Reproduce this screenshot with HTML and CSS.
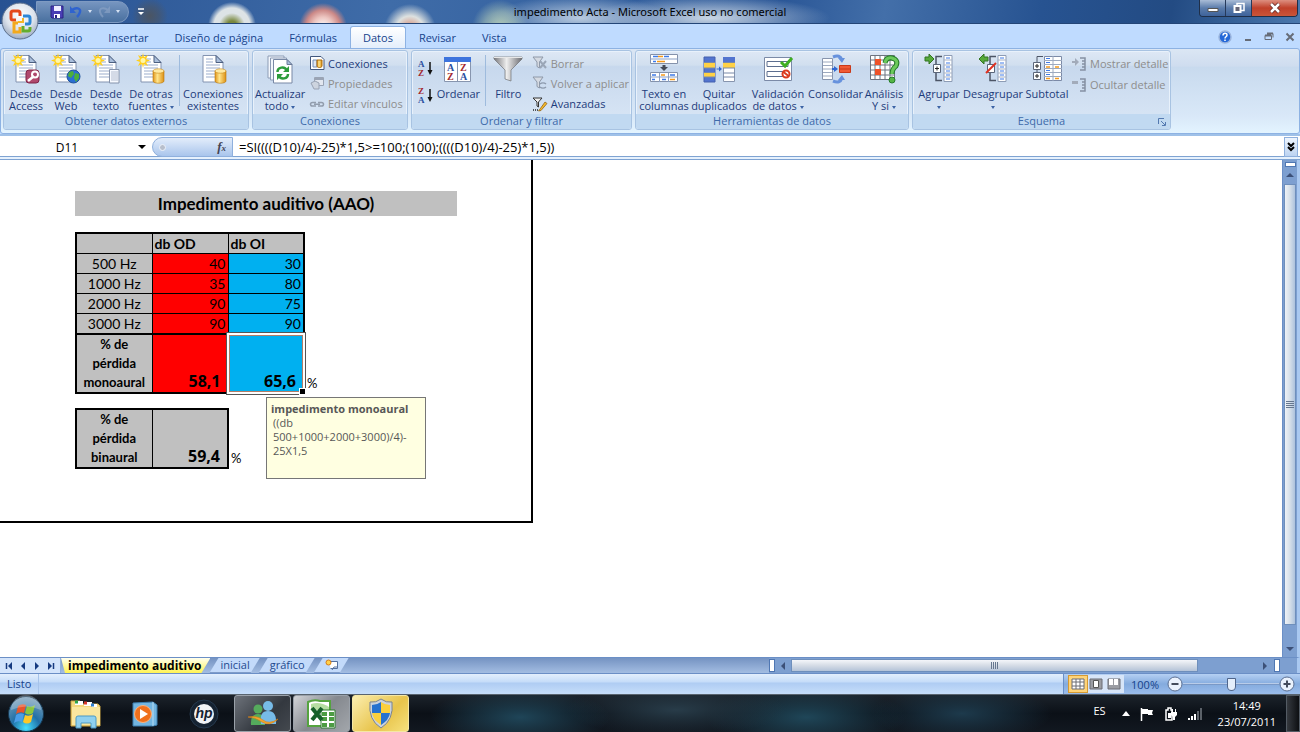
FILE: index.html
```html
<!DOCTYPE html>
<html lang="es">
<head>
    <meta charset="UTF-8">
    <meta name="viewport" content="width=device-width, initial-scale=1.0">
    <title>impedimento Acta - Microsoft Excel uso no comercial</title>
    <link rel="stylesheet" href="styles.css">
</head>
<body>
    <!-- Shared icon parts -->
    <svg class="defs" aria-hidden="true">
        <defs>
            <linearGradient id="gold" x1="0" x2="1" y1="0" y2="0"><stop offset="0" stop-color="#e0951a"/><stop offset=".4" stop-color="#ffe58c"/><stop offset="1" stop-color="#dc9014"/></linearGradient>
            <linearGradient id="steel" x1="0" x2="1" y1="0" y2="0"><stop offset="0" stop-color="#77777b"/><stop offset=".45" stop-color="#eeeeee"/><stop offset="1" stop-color="#6d6d72"/></linearGradient>
            <radialGradient id="orb" cx=".5" cy=".35" r=".65"><stop offset="0" stop-color="#fff"/><stop offset=".6" stop-color="#dde3ec"/><stop offset="1" stop-color="#9cabc2"/></radialGradient>
            <radialGradient id="start" cx=".5" cy=".9" r=".9"><stop offset="0" stop-color="#44e0ff"/><stop offset=".45" stop-color="#2070a8"/><stop offset="1" stop-color="#7d9fb8"/></radialGradient>
            <symbol id="page" viewBox="0 0 32 32">
                <path d="M6 2.500h13l7 7V29H6z" fill="#fff" stroke="#8393b0"/>
                <path d="M19 2.500v7h7z" fill="#a9bedb" stroke="#4c5f80"/>
                <path d="M9 12h14M9 15h14M9 18h14M9 21h14M9 24h14M9 6h7M9 9h7" stroke="#9badcc"/>
            </symbol>
            <symbol id="spark" viewBox="0 0 32 32">
                <path d="M8 0l1 4 4-2-2 4 4 1.500-4 1.500 2 4-4-2-1 4-1-4-4 2 2-4-4-1.500 4-1.500-2-4 4 2z" fill="#ffcf1e"/>
                <circle cx="8" cy="7.500" r="2.500" fill="#fff7a8"/>
            </symbol>
            <symbol id="drum" viewBox="0 0 32 32">
                <path d="M18 18v10c0 3 11 3 11 0V18z" fill="url(#gold)" stroke="#b9770c" stroke-width=".6"/>
                <ellipse cx="23.500" cy="18" rx="5.500" ry="2.200" fill="#ffe9a0" stroke="#c98a18" stroke-width=".6"/>
            </symbol>
            <symbol id="outline" viewBox="0 0 32 32">
                <path d="M21 2.500h8v26h-8z" fill="#fff" stroke="#8d9cb5"/>
                <path d="M21 7h8M21 12h8M21 16h8M21 20h8M21 24h8" stroke="#a9b4c6"/>
                <path d="M23 5h4M23 10h4M23 14h4M23 18h4M23 22h4M23 26h4" stroke="#3f7be8"/>
                <path d="M19 3.500h-6V11M13 20v7.500h6" fill="none" stroke="#4c5566" stroke-width="1.500"/>
            </symbol>
            <symbol id="funnel" viewBox="0 0 16 16">
                <path d="M1 2h10L7.500 7v6L5 11.500V7z" fill="#d5dae2" stroke="#8e98a8"/>
            </symbol>
        </defs>
    </svg>

    <header class="titlebar">
        <div class="quick">
            <button class="plain" aria-label="Guardar"><svg width="14" height="14" viewBox="0 0 14 14"><path d="M1 1h12v12H2l-1-1z" fill="#4a3fb5" stroke="#2b2382"/><path d="M4 1h7v5H4z" fill="#eef"/><path d="M4 9h6v4H4z" fill="#fff"/><path d="M5 10h2v3H5z" fill="#2b2382"/></svg></button>
            <button class="plain" aria-label="Deshacer"><svg width="14" height="14" viewBox="0 0 14 14"><path d="M3 5c4-3 9-2 8 2-.5 2-2 4-3 5" fill="none" stroke="#2f63cf" stroke-width="2.500"/><path d="M1 1v7h6z" fill="#2f63cf"/></svg></button>
            <i class="arrow pale"></i>
            <button class="plain faded" aria-label="Rehacer"><svg width="14" height="14" viewBox="0 0 14 14"><path d="M11 5c-4-3-9-2-8 2 .5 2 2 4 3 5" fill="none" stroke="#8fa6c8" stroke-width="2"/><path d="M13 1v7H7z" fill="#8fa6c8"/></svg></button>
            <i class="arrow pale"></i>
        </div>
        <button class="plain more" aria-label="Personalizar barra"><svg width="8" height="8" viewBox="0 0 8 8"><path d="M1 1h6" stroke="#fff" stroke-width="1.500"/><path d="M1 4h6L4 7z" fill="#fff"/></svg></button>
        <h1 class="caption">impedimento Acta - Microsoft Excel uso no comercial</h1>
        <div class="window-buttons">
            <button aria-label="Minimizar"><svg width="12" height="12" viewBox="0 0 12 12"><path d="M1 6.500h10v3H1z" fill="#fff" stroke="#555"/></svg></button>
            <button aria-label="Restaurar"><svg width="12" height="12" viewBox="0 0 12 12"><path d="M4 1.500h7v7H4z" fill="none" stroke="#fff" stroke-width="1.500"/><path d="M1.500 4h6v6h-6z" fill="#667" stroke="#fff" stroke-width="2"/></svg></button>
            <button class="close" aria-label="Cerrar"><svg width="12" height="12" viewBox="0 0 12 12"><path d="M2 2l8 8M10 2l-8 8" stroke="#5b2525" stroke-width="4"/><path d="M2 2l8 8M10 2l-8 8" stroke="#fff" stroke-width="2.500"/></svg></button>
        </div>
        <button class="office" aria-label="Botón de Office">
            <svg width="38" height="38" viewBox="0 0 38 38">
                <circle cx="19" cy="19" r="18" fill="url(#orb)" stroke="#5c6f8c"/>
                <g fill="none" stroke-width="3">
                    <path d="M15 18h-3q-2 0-2-2v-5q0-2 2-2h5q2 0 2 2v3" stroke="#e4481c"/>
                    <path d="M22 14h5q2 0 2 2v4q0 2-2 2h-3" stroke="#2d86d6"/>
                    <path d="M17 21h-4v9h6v-5" stroke="#f3a91c"/>
                    <path d="M22 24v5h5q2 0 2-2v-2" stroke="#64ae2c"/>
                    <path d="M17 20h5v-4" stroke="#f5b526" stroke-width="2"/>
                </g>
            </svg>
        </button>
    </header>

    <nav class="tabs">
        <button>Inicio</button>
        <button>Insertar</button>
        <button>Diseño de página</button>
        <button>Fórmulas</button>
        <button class="active">Datos</button>
        <button>Revisar</button>
        <button>Vista</button>
        <div class="doc-buttons">
            <button aria-label="Ayuda"><svg width="14" height="14" viewBox="0 0 14 14"><circle cx="7" cy="7" r="6" fill="#2468d8" stroke="#9ab4dd" stroke-width="1.500"/><path d="M5 5.500c0-3 4-3 4-.5C9 7 7 6.500 7 8.500M7 9.500V11" fill="none" stroke="#fff" stroke-width="1.500"/></svg></button>
            <button aria-label="Minimizar libro"><svg width="10" height="10" viewBox="0 0 10 10"><path d="M2 8h6" stroke="#666c77" stroke-width="2"/></svg></button>
            <button aria-label="Restaurar libro"><svg width="10" height="10" viewBox="0 0 10 10"><path d="M3 1.500h6v4M1 3.500h6.500v4H1z" fill="none" stroke="#666c77"/><path d="M1 3.500h6M3 1.500h6" stroke="#666c77" stroke-width="2"/></svg></button>
            <button aria-label="Cerrar libro"><svg width="10" height="10" viewBox="0 0 10 10"><path d="M1.500 1.500l7 7M8.500 1.500l-7 7" stroke="#666c77" stroke-width="2"/></svg></button>
        </div>
    </nav>

    <div class="ribbon">
        <section class="group external">
            <div class="tools">
                <button class="big"><svg viewBox="0 0 32 32"><use href="#page"/><use href="#spark"/><rect x="16" y="17" width="13" height="13" rx="3" fill="#b0486d" stroke="#7f2447"/><path d="M18 28l6-5" stroke="#fff" stroke-width="2.500"/><circle cx="25" cy="21.500" r="3" fill="none" stroke="#fff" stroke-width="2"/></svg>Desde<br>Access</button>
                <button class="big"><svg viewBox="0 0 32 32"><use href="#page"/><use href="#spark"/><circle cx="23.500" cy="23.500" r="6.500" fill="#2a6ed2" stroke="#20539c"/><path d="M19 19l4-1 1 3-3 4-3-2zM25 20l4 1v4l-3 4-2-4z" fill="#4caf3a"/></svg>Desde<br>Web</button>
                <button class="big"><svg viewBox="0 0 32 32"><use href="#page"/><use href="#spark"/><path d="M19.500 16.500h9.500V30h-9.500z" fill="#f6f9ff" stroke="#8492ab"/><path d="M21 19h7M21 21h7M21 23h7M21 25h7M21 27h7" stroke="#b3bdd0"/></svg>Desde<br>texto</button>
                <button class="big wide"><svg viewBox="0 0 32 32"><use href="#page"/><use href="#spark"/><use href="#drum"/></svg>De otras<br>fuentes <i class="arrow"></i></button>
                <i class="rule"></i>
                <button class="big wider"><svg viewBox="0 0 32 32"><use href="#page"/><use href="#drum"/></svg>Conexiones<br>existentes</button>
            </div>
            <h2>Obtener datos externos</h2>
        </section>

        <section class="group connections">
            <div class="tools">
                <button class="big wide"><svg viewBox="0 0 32 32"><path d="M4 3h16v22H4z" fill="#f3f7fd" stroke="#8d9cb5"/><path d="M6.500 5h16v22h-16z" fill="#f3f7fd" stroke="#8d9cb5"/><path d="M9.500 6.500H23l5 5V30H9.500z" fill="#fff" stroke="#7888a5"/><path d="M23 6.500v5h5z" fill="#a9bedb" stroke="#6b7b99"/><path d="M13.500 19c0-5 7-6 9-2M24 21c0 5-7 6-9 2" fill="none" stroke="#2e9c3c" stroke-width="2.500"/><path d="M25 13v6h-6zM13 27v-6h6z" fill="#2e9c3c"/></svg>Actualizar<br>todo <i class="arrow"></i></button>
                <div class="stack">
                    <button><svg width="16" height="16" viewBox="0 0 16 16"><path d="M1.500 1.500H12l3 3v10H1.500z" fill="#fff" stroke="#42577d"/><path d="M4 5h4v7H4z" fill="#dce6f5" stroke="#758fb7"/><path d="M8 5v6c0 2 5 2 5 0V5z" fill="url(#gold)" stroke="#a8690b"/></svg>Conexiones</button>
                    <button disabled><svg width="16" height="16" viewBox="0 0 16 16"><path d="M5.500 2.500h9v8h-9z" fill="#e2e7f0" stroke="#9aa4b5"/><path d="M6 4h8" stroke="#9aa4b5" stroke-width="2"/><path d="M2 8l4-2 4 2v6H5z" fill="#cdd4df" stroke="#98a2b3"/></svg>Propiedades</button>
                    <button disabled><svg width="16" height="16" viewBox="0 0 16 16"><path d="M7 6.500H3.500q-2 0-2 1.800t2 1.800H7M9 6.500h3.500q2 0 2 1.800t-2 1.800H9M5 8.300h6" fill="none" stroke="#929dad" stroke-width="1.500"/></svg>Editar vínculos</button>
                </div>
            </div>
            <h2>Conexiones</h2>
        </section>

        <section class="group sorting">
            <div class="tools">
                <div class="sorters">
                    <button aria-label="Ordenar de A a Z"><svg width="18" height="18" viewBox="0 0 18 18"><text x="1" y="8" class="ico-letter blue">A</text><text x="1" y="17" class="ico-letter red">Z</text><path d="M13 3v9" stroke="#111" stroke-width="1.500"/><path d="M10.500 11h5L13 16z" fill="#111"/></svg></button>
                    <button aria-label="Ordenar de Z a A"><svg width="18" height="18" viewBox="0 0 18 18"><text x="1" y="8" class="ico-letter red">Z</text><text x="1" y="17" class="ico-letter blue">A</text><path d="M13 3v9" stroke="#111" stroke-width="1.500"/><path d="M10.500 11h5L13 16z" fill="#111"/></svg></button>
                </div>
                <button class="big order"><svg viewBox="0 0 32 32"><path d="M2.500 4.500h26v24h-26z" fill="#fff" stroke="#8795ae"/><path d="M2 4h27v5H2z" fill="#3d74dd"/><path d="M15.500 9v19" stroke="#8795ae"/><g class="ico-letter tall"><text x="5" y="18" class="blue">A</text><text x="5" y="27" class="red">Z</text><text x="18" y="18" class="red">Z</text><text x="18" y="27" class="blue">A</text></g></svg>Ordenar</button>
                <i class="rule"></i>
                <button class="big"><svg viewBox="0 0 32 32"><path d="M2 4h28v2L19 17v11l-6-2V17L2 6z" fill="url(#steel)" stroke="#707277" stroke-width=".7"/><path d="M2 4.500h28" stroke="#e8e8e8"/></svg>Filtro</button>
                <div class="stack">
                    <button disabled><svg width="16" height="16" viewBox="0 0 16 16"><use href="#funnel"/><path d="M8 6l6 7M14 6l-6 7" stroke="#9aa6b7" stroke-width="2"/></svg>Borrar</button>
                    <button disabled><svg width="16" height="16" viewBox="0 0 16 16"><use href="#funnel"/><path d="M8 9a4 3 0 0 1 6 0M14 12a4 3 0 0 1-6 0" fill="none" stroke="#8e9bae" stroke-width="1.500"/></svg>Volver a aplicar</button>
                    <button><svg width="16" height="16" viewBox="0 0 16 16"><path d="M1 2h9L6.500 6v5L5 10V6z" fill="#eee" stroke="#333"/><path d="M8 13l-1.500 2L9 14.500l6-7-2-1.500z" fill="#f5b92c" stroke="#86590b" stroke-width=".7"/><path d="M1 14h5" stroke="#222" stroke-dasharray="1 1" stroke-width="1.500"/></svg>Avanzadas</button>
                </div>
            </div>
            <h2>Ordenar y filtrar</h2>
        </section>

        <section class="group datatools">
            <div class="tools">
                <button class="big"><svg viewBox="0 0 32 32"><path d="M2.500 1.500h27v9h-27zM2.500 19.500h27v9h-27z" fill="#fff" stroke="#8492ab"/><path d="M2 6h28M2 24h28M11.500 20v9M20.500 20v9" stroke="#8ba0c4"/><path d="M5 3.500h5M16 3.500h5M5 8.500h3M4 22h4M14 26.500h4M22 22h5M4 26.500h3" stroke="#3f7be8" stroke-width="1.500"/><path d="M10 3.500h5M9 8.500h8M13 22h4M22 26.500h5" stroke="#f59a1c" stroke-width="1.500"/><path d="M16 12v3" stroke="#444b57" stroke-width="3"/><path d="M12 14h8l-4 4z" fill="#444b57"/></svg>Texto en<br>columnas</button>
                <button class="big"><svg viewBox="0 0 32 32"><path d="M1 4h11v25H1z" fill="#5274cf" stroke="#4461ae"/><path d="M1 10h11v5H1zM1 20h11v4H1z" fill="#ffd145"/><path d="M20.500 4.500h11v24h-11z" fill="#fff" stroke="#8795ae"/><path d="M20 4h12v5H20z" fill="#5274cf"/><path d="M20 10h12v5H20z" fill="#ffd145"/><path d="M1 9.500h11M1 15h11M1 19.500h11M1 24h11M20 9.500h12M20 15h12M20 20h12M20 24h12" stroke="#7889a8"/><path d="M13.500 16h3" stroke="#3167cf"/><path d="M16 13.500l3 2.500-3 2.500z" fill="#3167cf"/></svg>Quitar<br>duplicados</button>
                <button class="big wider"><svg viewBox="0 0 32 32"><path d="M2.500 4.500h27v23h-27z" fill="#fff" stroke="#7b8aa7"/><path d="M5 8.500h21v5H5zM5 18.500h21v5H5z" fill="#fff" stroke="#5c6e8f"/><path d="M19 9l4 4 7-8" fill="none" stroke="#3fae22" stroke-width="3"/><circle cx="24" cy="21" r="3.500" fill="#fff" stroke="#dc3b1e" stroke-width="2"/><path d="M21.500 19l5 4" stroke="#dc3b1e" stroke-width="2"/></svg>Validación<br>de datos <i class="arrow"></i></button>
                <button class="big"><svg viewBox="0 0 32 32"><path d="M3.500 5.500h10v21h-10z" fill="#fff" stroke="#8795ae"/><path d="M4 9h9M4 12.500h9M4 16h9M4 19.500h9M4 23h9" stroke="#9ca9bf"/><path d="M13 16h3" stroke="#3167cf" stroke-width="2"/><path d="M15 13l4 3-4 3z" fill="#3167cf"/><path d="M20.500 12.500h11v7h-11z" fill="#f05a35" stroke="#c93a1a"/><path d="M21 16h10" stroke="#c93a1a"/><path d="M14 4q7-3 9 3M14 28q7 3 9-3" fill="none" stroke="#6792dd" stroke-width="3"/><path d="M19 5h7l-3 5zM19 27h7l-3-5z" fill="#6792dd"/></svg>Consolidar</button>
                <button class="big"><svg viewBox="0 0 32 32"><path d="M2.500 2.500h24v24h-24z" fill="#fff" stroke="#6d7480"/><path d="M2 7h25M2 12h25M2 17h25M2 22h25M7 2v25M12 2v25M17 2v25M22 2v25" stroke="#6d7480"/><path d="M7 6h6v6H7zM7 16h6v6H7z" fill="#ee5228"/><path d="M17 10q1-6 7-5 7 2 4 8-4 3-4 8" fill="none" stroke="#257c2a" stroke-width="5"/><path d="M17 10q1-6 7-5 7 2 4 8-4 3-4 8" fill="none" stroke="#6cc95b" stroke-width="3"/><circle cx="24" cy="27" r="3" fill="#55b545" stroke="#257c2a"/></svg>Análisis<br>Y si <i class="arrow"></i></button>
            </div>
            <h2>Herramientas de datos</h2>
        </section>

        <section class="group scheme">
            <div class="tools">
                <button class="big wide"><svg viewBox="0 0 32 32"><use href="#outline"/><path d="M2 4h4V1l5 5-5 5V8H2z" fill="#57a93a" stroke="#327422"/><path d="M10.500 11.500h7v8h-7z" fill="#fff" stroke="#5a6579"/><path d="M12 15.500h4M14 13.500v4" stroke="#222"/></svg>Agrupar<br><i class="arrow"></i></button>
                <button class="big"><svg viewBox="0 0 32 32"><use href="#outline"/><path d="M11 4H7V1L2 6l5 5V8h4z" fill="#57a93a" stroke="#327422"/><path d="M10.500 11.500h7v8h-7z" fill="#fff" stroke="#5a6579"/><path d="M9 20l10-10" stroke="#e03222" stroke-width="2"/></svg>Desagrupar<br><i class="arrow"></i></button>
                <button class="big order"><svg viewBox="0 0 32 32"><path d="M2.500 9.500h7v7h-7zM2.500 19.500h7v7h-7z" fill="#fff" stroke="#5a6579"/><path d="M13.500 3.500h17v24h-17z" fill="#fff" stroke="#7b8aa7"/><path d="M13 7.500h18M13 11.500h18M13 15.500h18M13 19.500h18M13 23.500h18M22 3v25" stroke="#9ca9bf"/><path d="M15 5.500h4M15 9.500h4M15 17.500h4M15 21.500h4" stroke="#3f7be8"/><path d="M15 14h4M24 14h4M15 25.500h4M24 25.500h4" stroke="#f59a1c" stroke-width="1.500"/><path d="M12 3.500H6V9M6 16v3" fill="none" stroke="#4c5566"/><path d="M4 13h4M6 11v4M4 23h4M6 21v4" stroke="#222"/></svg>Subtotal</button>
                <div class="stack">
                    <button disabled><svg width="16" height="16" viewBox="0 0 16 16"><path d="M1 5h3V2l4 4-4 4V7H1z" fill="#a2abba"/><path d="M9 2h5v12H9M11 5h3M11 8h3M11 11h3" fill="none" stroke="#8590a2" stroke-width="1.500"/></svg>Mostrar detalle</button>
                    <button disabled><svg width="16" height="16" viewBox="0 0 16 16"><path d="M1 4h6v3H1z" fill="#a2abba"/><path d="M9 2h5v12H9M11 5h3M11 8h3M11 11h3" fill="none" stroke="#8590a2" stroke-width="1.500"/></svg>Ocultar detalle</button>
                </div>
            </div>
            <h2>Esquema</h2>
            <button class="launcher" aria-label="Configuración de esquema"><svg width="8" height="8" viewBox="0 0 8 8"><path d="M.5 6V.5H6M4 7.500h3.500V4M3 3l4 4" fill="none" stroke="#5479b0"/></svg></button>
        </section>
    </div>

    <div class="formula-bar">
        <input class="name-box" type="text" value="D11" aria-label="Cuadro de nombres">
        <i class="arrow dark"></i>
        <div class="fx"><i class="knob"></i><button aria-label="Insertar función">f<small>x</small></button></div>
        <input class="formula" type="text" value="=SI((((D10)/4)-25)*1,5&gt;=100;(100);((((D10)/4)-25)*1,5))" aria-label="Barra de fórmulas">
        <button class="expand" aria-label="Expandir barra de fórmulas"><svg width="8" height="10" viewBox="0 0 8 10"><path d="M1 1l3 3 3-3M1 5l3 3 3-3" fill="none" stroke="#000" stroke-width="2"/></svg></button>
    </div>

    <main class="workbook">
        <div class="sheet">
            <div class="print-area">
                <h2 class="sheet-title">Impedimento auditivo (AAO)</h2>
                <div class="result">
                    <table>
                        <tr class="head"><th></th><th scope="col">db OD</th><th scope="col">db OI</th></tr>
                        <tr><th scope="row">500 Hz</th><td class="od">40</td><td class="oi">30</td></tr>
                        <tr><th scope="row">1000 Hz</th><td class="od">35</td><td class="oi">80</td></tr>
                        <tr><th scope="row">2000 Hz</th><td class="od">90</td><td class="oi">75</td></tr>
                        <tr><th scope="row">3000 Hz</th><td class="od">90</td><td class="oi">90</td></tr>
                        <tr class="total"><th scope="row">% de pérdida monoaural</th><td class="od">58,1</td><td class="oi selected">65,6</td></tr>
                    </table>
                    <span class="unit">%</span>
                    <div class="tip"><b>impedimento monoaural</b><p>((db 500+1000+2000+3000)/4)-<wbr>25X1,5</p></div>
                </div>
                <div class="result">
                    <table class="short">
                        <tr class="total"><th scope="row">% de pérdida binaural</th><td>59,4</td></tr>
                    </table>
                    <span class="unit">%</span>
                </div>
            </div>
        </div>
        <div class="vscroll">
            <i class="split"></i>
            <i class="up"></i>
            <div class="thumb"></div>
            <i class="down"></i>
        </div>
    </main>

    <div class="sheet-bar">
        <div class="sheet-nav">
            <button aria-label="Primera hoja"><svg width="8" height="8" viewBox="0 0 8 8"><path d="M1.500 1v6" stroke="#173b80" stroke-width="1.500"/><path d="M7 0v8L3 4z" fill="#173b80"/></svg></button>
            <button aria-label="Hoja anterior"><svg width="8" height="8" viewBox="0 0 8 8"><path d="M6 0v8L2 4z" fill="#173b80"/></svg></button>
            <button aria-label="Hoja siguiente"><svg width="8" height="8" viewBox="0 0 8 8"><path d="M2 0v8l4-4z" fill="#173b80"/></svg></button>
            <button aria-label="Última hoja"><svg width="8" height="8" viewBox="0 0 8 8"><path d="M6.500 1v6" stroke="#173b80" stroke-width="1.500"/><path d="M1 0v8l4-4z" fill="#173b80"/></svg></button>
        </div>
        <div class="sheet-tabs">
            <button class="current">impedimento auditivo</button>
            <button>inicial</button>
            <button>gráfico</button>
            <button aria-label="Insertar hoja"><svg width="14" height="12" viewBox="0 0 14 12"><path d="M4.500 2.500h8v7h-7" fill="#fff" stroke="#5470a0"/><path d="M7 11l2-3h3" fill="none" stroke="#5470a0"/><circle cx="3.500" cy="3.500" r="2.500" fill="#ffd24a" stroke="#d77b17"/></svg></button>
        </div>
        <div class="hscroll">
            <i class="split"></i>
            <i class="left"></i>
            <div class="thumb"></div>
            <i class="right"></i>
            <i class="split"></i>
        </div>
    </div>

    <footer class="status">
        <span class="ready">Listo</span>
        <div class="zoom">
            <div class="views">
                <button class="on" aria-label="Normal"><svg width="14" height="12" viewBox="0 0 14 12"><path d="M1 1h12v10H1zM1 4h12M1 8h12M5 1v10M9 1v10" fill="#fff" stroke="#6a6d75"/></svg></button>
                <button aria-label="Diseño de página"><svg width="14" height="12" viewBox="0 0 14 12"><path d="M1 1h12v10H1z" fill="#9b9da3" stroke="#6a6d75"/><path d="M4.500 2.500h5v7h-5z" fill="#fff" stroke="#555"/></svg></button>
                <button aria-label="Vista previa de salto de página"><svg width="14" height="12" viewBox="0 0 14 12"><path d="M1 1h12v10H1z" fill="#9b9da3" stroke="#6a6d75"/><path d="M2 1h4v6H2zM7 1h4v6H7z" fill="#fff"/></svg></button>
            </div>
            <label for="zoom">100%</label>
            <button class="round" aria-label="Alejar"><svg width="16" height="16" viewBox="0 0 16 16"><circle cx="8" cy="8" r="7" fill="#eaf2fd" stroke="#5b6f92"/><path d="M4.500 8h7" stroke="#444c5c" stroke-width="2"/></svg></button>
            <input type="range" id="zoom" min="0" max="100" value="50">
            <button class="round" aria-label="Acercar"><svg width="16" height="16" viewBox="0 0 16 16"><circle cx="8" cy="8" r="7" fill="#eaf2fd" stroke="#5b6f92"/><path d="M4.500 8h7M8 4.500v7" stroke="#444c5c" stroke-width="2"/></svg></button>
        </div>
    </footer>

    <div class="taskbar">
        <button class="start" aria-label="Inicio de Windows"><svg width="38" height="38" viewBox="0 0 38 38"><circle cx="19" cy="19" r="17.500" fill="url(#start)" stroke="#16364e"/><path d="M11 11q4-3 8-1l-2 8q-4-2-8 1z" fill="#e8542a"/><path d="M20 11q4 2 8-1l-2 8q-4 3-8 0z" fill="#8cc63e"/><path d="M9 20q4-3 8-1l-2 8q-4-2-8 1z" fill="#4a9de8"/><path d="M18 20q4 2 8-1l-2 8q-4 3-8 0z" fill="#fdc828"/><path d="M4 15a15 15 0 0 1 30 0q-15-7-30 0z" fill="#fff" opacity=".25"/></svg></button>
        <button aria-label="Explorador de Windows"><svg width="34" height="32" viewBox="0 0 34 32"><path d="M2 8V3h9l2 3h16l2 2v20H2z" fill="#f3d67c" stroke="#c9a343"/><path d="M6 5h8M15 6h8M23 8h5" stroke="#fff" stroke-width="4"/><path d="M6 4h3" stroke="#2ca34a" stroke-width="3"/><path d="M15 5h3" stroke="#d9362b" stroke-width="3"/><path d="M22 7h3" stroke="#2f7fd0" stroke-width="3"/><path d="M3 9h28v18H3z" fill="#fae69f"/><path d="M7 30V20q0-2 2-2h16q2 0 2 2v10h-5v-5H12v5z" fill="#8fd0ef" stroke="#4d99c4"/></svg></button>
        <button aria-label="Reproductor de Windows Media"><svg width="28" height="28" viewBox="0 0 28 28"><path d="M2 3l20-1 4 3v20l-4 1H2z" fill="#73b5e0" stroke="#3c7fb0"/><path d="M22 2v24" stroke="#b8dcf2"/><circle cx="12" cy="14" r="8.500" fill="#f0701c" stroke="#fbb27c"/><path d="M9 9l8 5-8 5z" fill="#fff"/></svg></button>
        <button aria-label="HP"><svg width="32" height="32" viewBox="0 0 32 32"><circle cx="16" cy="16" r="14" fill="#152231" stroke="#26394d"/><circle cx="16" cy="16" r="10" fill="#f1f3f5"/><text x="16" y="20" class="hp" text-anchor="middle">hp</text></svg></button>
        <button class="open" aria-label="Messenger"><svg width="34" height="32" viewBox="0 0 34 32"><circle cx="12" cy="11" r="4.500" fill="#55ab5c"/><path d="M5 27q-1-11 7-11t7 11z" fill="#55ab5c"/><circle cx="22" cy="8" r="5" fill="#77bbe8"/><path d="M15 26q-2-13 7-13t8 13z" fill="#77bbe8"/><path d="M2 19q9-2 15 3t15-1q-8 8-16 3T2 19z" fill="#f5a62c" stroke="#d67f12" stroke-width=".6"/></svg></button>
        <button class="open lit" aria-label="Microsoft Excel"><svg width="34" height="32" viewBox="0 0 34 32"><path d="M3 4q6-3 12-1h10v25H3z" fill="#fff" stroke="#55a33f" stroke-width="2"/><path d="M6 6q9-3 18 3v3H6z" fill="#b6dda2"/><path d="M16 12h14v18H16z" fill="#fff" stroke="#2f7d2f"/><path d="M17 14h5v4h-5zM24 14h5v4h-5zM17 19h5v4h-5zM24 19h5v4h-5zM17 25h5v4h-5zM24 25h5v4h-5z" fill="#4c9c42"/><path d="M7 10l10 12M17 10L7 22" stroke="#17602b" stroke-width="4"/></svg></button>
        <button class="open alert" aria-label="Control de cuentas"><svg width="28" height="32" viewBox="0 0 28 32"><path d="M14 1q5 4 11 3 2 18-11 26Q1 22 3 4q6 1 11-3z" fill="#ccd3dc" stroke="#7a838f"/><path d="M14 4v11H5V7q5 0 9-3z" fill="#2672cf"/><path d="M14 4v11h9V7q-5 0-9-3z" fill="#fbd03d"/><path d="M5 15h9v12Q6 22 5 15z" fill="#fbd03d"/><path d="M14 15h9q-1 7-9 12z" fill="#2672cf"/></svg></button>
        <div class="tray">
            <span class="lang">ES</span>
            <svg width="8" height="5" viewBox="0 0 8 5"><path d="M0 5l4-5 4 5z" fill="#fff"/></svg>
            <svg width="14" height="14" viewBox="0 0 14 14"><path d="M1.500 1v13" stroke="#fff" stroke-width="1.500"/><path d="M2 2h6v1h5l-1 3 1 2H8V7H2z" fill="#fff"/></svg>
            <svg width="14" height="14" viewBox="0 0 14 14"><path d="M2 3h2V1h3v2h1v10H2z" fill="none" stroke="#fff" stroke-width="1.500"/><path d="M4 6h3v5H4zM7 5h6v3l-2 2v3H9v-3L7 8z" fill="#fff"/><path d="M8.500 2v3M11.500 2v3" stroke="#fff"/></svg>
            <svg width="14" height="12" viewBox="0 0 14 12"><path d="M0 10h2v2H0zM3 8h2v4H3zM6 6h2v6H6z" fill="#fff"/><path d="M9 3h2v9H9zM12 0h2v12h-2z" fill="#5b6168"/></svg>
            <div class="clock"><time>14:49</time><time>23/07/2011</time></div>
            <button class="desktop" aria-label="Mostrar escritorio"></button>
        </div>
    </div>
</body>
</html>
```
FILE: styles.css
```css
* {
    box-sizing: border-box;
}
body {
    margin: 0;
    min-height: 100vh;
    display: flex;
    flex-direction: column;
    font-family: "Open Sans", "Noto Sans", sans-serif;
    font-size: 11px;
    color: #1e3c7b;
    background-color: #bfdbff;
}
button, input {
    font: inherit;
    color: inherit;
    background: none;
    border: 0;
    padding: 0;
    margin: 0;
}
h1, h2, p {
    margin: 0;
    font-size: 11px;
    font-weight: normal;
}
svg {
    display: block;
}
.defs {
    position: absolute;
    width: 0;
    height: 0;
}
.arrow {
    display: inline-block;
    border: 2px solid transparent;
    border-top: 3px solid #3c63a5;
    border-bottom: 0;
    vertical-align: middle;
}
.arrow.pale {
    border-top-color: #d5e2f3;
}
.arrow.dark {
    border-width: 4px 4px 0;
    border-top-color: #000;
}

/* Title bar */
.titlebar {
    position: relative;
    height: 24px;
    display: flex;
    align-items: center;
    background:
        radial-gradient(circle at 150px 16px, #4b5563 0, #4b556388 10px, transparent 18px),
        radial-gradient(circle at 232px 26px, #79883e 0, #79883e 5px, #dde3e6 13px, #dde3e6 18px, transparent 24px),
        radial-gradient(circle at 323px 27px, #fff 0, #ecc5c0 10px, #cc8987 17px, transparent 24px),
        radial-gradient(circle at 410px 30px, #d37b60 0, #dde1e0 14px, transparent 26px),
        radial-gradient(circle at 500px 28px, #b6ceb8 0, #b6ceb888 16px, transparent 28px),
        radial-gradient(ellipse 90px 22px at 580px 18px, #b9cbe0 0, transparent),
        radial-gradient(ellipse 120px 22px at 710px 18px, #c9d6e5 0, transparent),
        linear-gradient(100deg, #285292, #3f6ca8 30%, #2b5797 60%, #436fa9 68%, #275391 80%, #234b83 90%, #4a78ad);
    border-bottom: 1px solid #234577;
}
.quick {
    height: 22px;
    margin-left: 36px;
    padding: 0 8px 0 13px;
    display: flex;
    align-items: center;
    gap: 5px;
    border: 1px solid #7e9ac2;
    border-radius: 0 11px 11px 0;
    background: linear-gradient(#7695c0, #49709f);
}
.faded {
    opacity: .6;
}
.more {
    margin-left: 8px;
}
.caption {
    position: absolute;
    left: 0;
    right: 0;
    text-align: center;
    font-family: "Noto Sans", sans-serif;
    color: #000;
    pointer-events: none;
}
.window-buttons {
    margin-left: auto;
    margin-right: 2px;
    align-self: flex-start;
    display: flex;
    height: 17px;
    border: 1px solid #1f2f49;
    border-top: 0;
    border-radius: 0 0 4px 4px;
    overflow: hidden;
}
.window-buttons button {
    width: 26px;
    display: grid;
    place-items: center;
    background: linear-gradient(#a9bcd6, #5b7cab 50%, #3e639b);
    border-right: 1px solid #26395a;
}
.window-buttons .close {
    width: 45px;
    border: 0;
    background: linear-gradient(#dd8f80, #c0402a 50%, #c95538);
}
.office {
    position: absolute;
    left: 1px;
    top: 2px;
    z-index: 2;
}

/* Ribbon tabs */
.tabs {
    height: 24px;
    padding: 2px 5px 0 42px;
    display: flex;
    background: #bfdbff;
    color: #15428b;
}
.tabs > button {
    padding: 0 12px;
    border: 1px solid transparent;
    white-space: nowrap;
}
.tabs .active {
    border-color: #8db2e3;
    border-bottom: 0;
    border-radius: 3px 3px 0 0;
    background: linear-gradient(#fff, #e4eefb);
}
.doc-buttons {
    margin-left: auto;
    display: flex;
    align-items: center;
    gap: 11px;
}

/* Ribbon */
.ribbon {
    height: 86px;
    padding: 1px 2px 3px;
    display: flex;
    gap: 3px;
    border: 1px solid #8db2e3;
    border-radius: 3px;
    background: linear-gradient(#dbe6f4, #cfddef 20%, #c8daee 22%, #d9e8f8 80%, #e3f4ff);
}
.group {
    position: relative;
    display: flex;
    flex-direction: column;
    border: 1px solid #a8c3e2;
    border-radius: 3px;
    box-shadow: inset 0 0 0 1px #e8f1fb;
    overflow: hidden;
    background: linear-gradient(#dee8f5, #d1dfef 18%, #c7d8ed 20%, #dae7f6);
}
.external {
    width: 246px;
}
.connections {
    width: 156px;
}
.sorting {
    width: 221px;
}
.datatools {
    width: 274px;
}
.scheme {
    width: 259px;
}
.group h2 {
    height: 15px;
    line-height: 14px;
    text-align: center;
    color: #3e6aaa;
    background: #c1d9f1;
}
.tools {
    flex: 1;
    min-height: 0;
    padding: 2px 2px 0;
    display: flex;
}
.big {
    width: 40px;
    align-self: flex-start;
    white-space: nowrap;
    line-height: 12px;
    text-align: center;
}
.big svg {
    width: 32px;
    height: 32px;
    margin: 0 auto 3px;
}
.wide {
    width: 50px;
}
.wider {
    width: 60px;
}
.order {
    width: 48px;
}
.rule {
    width: 1px;
    margin: 2px 3px 8px;
    background: #9ebbdd;
}
.stack {
    margin-left: 4px;
    display: flex;
    flex-direction: column;
}
.stack button {
    height: 21px;
    display: flex;
    align-items: center;
    gap: 3px;
    white-space: nowrap;
}
.stack button:disabled {
    color: #8d8d8d;
}
.datatools .tools {
    display: grid;
    grid-template-columns: 52px 58px 60px 54px 44px;
}
.datatools .big {
    width: auto;
}
.scheme .tools {
    display: grid;
    grid-template-columns: 48px 60px 48px auto;
}
.scheme .big {
    width: auto;
}
.scheme .stack {
    margin-left: 0;
}
.sorters {
    padding: 6px 0 0 3px;
    display: flex;
    flex-direction: column;
    gap: 9px;
}
.ico-letter {
    font: bold 9px "Liberation Serif", serif;
}
.tall {
    font-size: 10px;
}
.blue {
    fill: #2a4f9f;
}
.red {
    fill: #a3282f;
}
.launcher {
    position: absolute;
    right: 4px;
    bottom: 3px;
}

/* Formula bar */
.formula-bar {
    height: 26px;
    padding: 3px 2px 3px 0;
    display: flex;
    align-items: stretch;
    color: #000;
    background: linear-gradient(#9fc1e8 0, #9fc1e8 2px, #fff 2px, #fff 22px, #7fa3d2 22px, #7fa3d2 23px, #e6f1fd 23px, #e6f1fd 25px, #7fa3d2 25px);
}
.formula-bar input {
    font-family: "Open Sans", sans-serif;
    font-size: 12px;
}
.name-box {
    width: 134px;
    text-align: center;
}
.formula-bar .arrow {
    align-self: center;
    margin: 0 6px 0 4px;
}
.fx {
    width: 81px;
    padding: 0 6px;
    display: flex;
    align-items: center;
    justify-content: space-between;
    border: 1px solid #8fb0dd;
    border-radius: 10px 0 0 10px;
    background: linear-gradient(#e3edfb, #a9c5ec);
}
.fx button {
    font: italic bold 13px "Liberation Serif", serif;
    color: #445;
}
.fx small {
    font-size: 9px;
}
.knob {
    width: 7px;
    height: 7px;
    border-radius: 50%;
    background: #b8bfcc;
    border: 1px solid #edf3fc;
}
.formula-bar .formula {
    flex: 1;
    padding: 0 6px;
    font-size: 13px;
}
.expand {
    width: 14px;
    display: grid;
    place-items: center;
    border: 1px solid #8fb0dd;
    background: linear-gradient(#eef5fe, #bcd3f1);
}

/* Worksheet */
.workbook {
    flex: 1;
    display: flex;
    border-right: 3px solid #a9c8f0;
    background: #fff;
    color: #000;
    font-family: Lato, sans-serif;
}
.sheet {
    flex: 1;
}
.print-area {
    width: 533px;
    padding: 31px 74px 52px 75px;
    border: solid #000;
    border-width: 0 2px 2px 0;
}
.sheet-title {
    margin-bottom: 16px;
    font: bold 17px/25px Lato, sans-serif;
    text-align: center;
    background: #c0c0c0;
}
.result {
    position: relative;
    display: flex;
    align-items: flex-end;
    margin-bottom: 14px;
}
.result:last-child {
    margin-bottom: 0;
}
table {
    width: 230px;
    table-layout: fixed;
    border-collapse: collapse;
    border: 2px solid #000;
    background: #c0c0c0;
    font-size: 14px;
    line-height: 19px;
}
.short {
    width: 154px;
}
th, td {
    height: 20px;
    padding: 0 2px;
    border: 1px solid #000;
}
th {
    font-weight: normal;
    text-align: center;
}
td {
    text-align: right;
}
.head th {
    font-weight: bold;
    text-align: left;
}
.od {
    background: #f00;
}
.oi {
    background: #00b0f0;
}
.total th, .total td {
    border-top: 2px solid #000;
    font-weight: bold;
}
.total th {
    font-size: 13px;
}
.total td {
    padding-right: 7px;
    font: bold 16px/22px "Open Sans", sans-serif;
    vertical-align: bottom;
}
.selected {
    position: relative;
}
.selected::before {
    content: "";
    position: absolute;
    right: -3px;
    bottom: -3px;
    z-index: 1;
    width: 5px;
    height: 5px;
    border: 1px solid #fff;
    background: #000;
}
.selected::after {
    content: "";
    position: absolute;
    inset: -2px;
    border: 2px solid #fff;
    box-shadow: inset 0 0 0 1px #b07d68, 0 0 0 1px #555;
}
.unit {
    margin-left: 2px;
    font-size: 13px;
    line-height: 22px;
}
.tip {
    position: absolute;
    left: 191px;
    top: 165px;
    width: 160px;
    height: 82px;
    padding: 4px;
    border: 1px solid #767676;
    background: #ffffe1;
    color: #575757;
    font: 11px/14px "Open Sans", sans-serif;
    white-space: nowrap;
}
.tip p {
    padding-left: 2px;
    width: 140px;
    white-space: normal;
}

/* Scroll bars */
.vscroll {
    width: 15px;
    padding: 2px 1px;
    display: flex;
    flex-direction: column;
    align-items: center;
    background: #7d9fd0;
    border-left: 1px solid #6b8fc6;
}
.vscroll .split {
    width: 11px;
    height: 5px;
    border: 1px solid #4f77b3;
    background: #fff;
}
.up, .down {
    margin: 6px 0 7px;
    border: 4px solid transparent;
    border-bottom-color: #3c5078;
    border-top: 0;
}
.down {
    margin: 22px 0 4px;
    border-top: 4px solid #3c5078;
    border-bottom: 0;
}
.vscroll .thumb {
    flex: 1;
    width: 12px;
    border: 1px solid #6e8fbc;
    background:
        repeating-linear-gradient(#66778f 0, #66778f 1px, transparent 1px, transparent 2px) center / 8px 8px no-repeat,
        linear-gradient(90deg, #eef2f7, #d5dfe9 50%, #adc2dd);
}
.sheet-bar {
    height: 16px;
    display: flex;
    border-right: 3px solid #a9c8f0;
    border-top: 1px solid #6b8fc6;
    background: linear-gradient(#7593c2, #a3bde2);
}
.sheet-nav {
    width: 61px;
    padding: 0 5px;
    display: flex;
    align-items: center;
    justify-content: space-between;
    border-right: 1px solid #8fb0dd;
    background: #d3e4fb;
}
.sheet-tabs {
    display: flex;
    color: #244a8f;
}
.sheet-tabs button {
    padding: 0 10px 0 11px;
    margin-right: -1px;
    line-height: 14px;
    background: #c3dafa;
    clip-path: polygon(0 100%, 9px 0, 100% 0, calc(100% - 9px) 100%);
    border-bottom: 1px solid #7f9cc9;
}
.sheet-tabs .current {
    padding: 0 9px 0 7px;
    font-weight: bold;
    font-size: 12px;
    color: #000;
    border: 0;
    background: linear-gradient(#fffff0, #fff352);
    clip-path: polygon(0 0, 100% 0, calc(100% - 9px) 100%, 4px 100%);
}
.hscroll {
    flex: 0 0 41%;
    max-width: 528px;
    margin-left: auto;
    padding-right: 17px;
    display: flex;
    align-items: center;
    background: #7d9fd0;
}
.hscroll .split {
    width: 6px;
    height: 13px;
    border: 1px solid #4f77b3;
    background: #fff;
}
.left, .right {
    margin: 0 6px;
    border: 4px solid transparent;
    border-right-color: #3c5078;
    border-left: 0;
}
.right {
    margin: 0 7px 0 65px;
    border-left: 4px solid #3c5078;
    border-right: 0;
}
.hscroll .thumb {
    flex: 1;
    height: 13px;
    border: 1px solid #6e8fbc;
    background:
        repeating-linear-gradient(90deg, #66778f 0, #66778f 1px, transparent 1px, transparent 2px) center / 8px 7px no-repeat,
        linear-gradient(#f4f6fa, #d5dce6 50%, #b4c3d8);
}

/* Status bar */
.status {
    height: 21px;
    display: flex;
    border-top: 1px solid #6b8fc6;
    background: linear-gradient(#e3effd, #c5dcf9 40%, #afccf3 45%, #c6defa);
    color: #15428b;
}
.ready {
    padding: 0 7px;
    line-height: 19px;
    border-right: 1px solid #a6c3ea;
}
.zoom {
    margin-left: auto;
    padding: 0 5px 0 4px;
    display: flex;
    align-items: center;
    border-left: 1px solid #6b8fc6;
    background: linear-gradient(#b5d0f3, #84abde 50%, #9bbdec);
}
.views {
    display: flex;
    margin-right: 7px;
    background: #d7e5f8;
    border: 1px solid #d7e5f8;
}
.views button {
    width: 18px;
    height: 16px;
    display: grid;
    place-items: center;
}
.views .on {
    background: #ffd479;
    outline: 1px solid #d59a34;
}
.zoom label {
    margin-right: 8px;
}
.zoom input {
    width: 96px;
    height: 18px;
    appearance: none;
    background: linear-gradient(#d7e6fa, #5b7fb5) center / 100% 2px no-repeat;
}
.zoom input::-webkit-slider-thumb {
    appearance: none;
    width: 9px;
    height: 13px;
    border: 1px solid #4f658b;
    border-radius: 1px 1px 5px 5px;
    background: #e4eefb;
}

/* Taskbar */
.taskbar {
    height: 38px;
    padding-left: 6px;
    display: flex;
    align-items: center;
    border-top: 1px solid #59646f;
    background:
        radial-gradient(ellipse 90px 30px at 40% 60%, #1f4558 0, transparent),
        radial-gradient(ellipse 110px 26px at 52% 40%, #283c49 0, transparent),
        radial-gradient(ellipse 100px 32px at 62% 60%, #1f4658 0, transparent),
        radial-gradient(ellipse 90px 28px at 74% 50%, #1d3a4c 0, transparent),
        linear-gradient(#1c232b, #0b1017 50%, #121820);
    color: #fff;
}
.taskbar > button {
    width: 57px;
    height: 37px;
    margin-right: 2px;
    display: grid;
    place-items: center;
}
.taskbar .start {
    width: 40px;
    margin-right: 11px;
}
.taskbar .open {
    border: 1px solid #9aa1a9;
    border-radius: 3px;
    background: linear-gradient(135deg, #6d727a, #33383f 60%, #44494f);
}
.taskbar .lit {
    background: linear-gradient(135deg, #d2d4d8, #85898f 50%, #a2a6ab);
}
.taskbar .alert {
    border-color: #f5e7a4;
    background: linear-gradient(135deg, #fbeeb0, #e8c44b 60%, #f6e17d);
}
.hp {
    font: italic bold 14px "Liberation Sans", sans-serif;
    fill: #152231;
}
.tray {
    margin-left: auto;
    height: 100%;
    display: flex;
    align-items: center;
    gap: 10px;
}
.lang {
    margin-right: 6px;
    padding-bottom: 6px;
}
.clock {
    margin: 0 0 0 6px;
    display: flex;
    flex-direction: column;
    text-align: center;
    line-height: 16px;
}
.desktop {
    width: 14px;
    height: 100%;
    border: 1px solid #535b64;
    background: linear-gradient(90deg, #35393f, #0d0f12);
}
```
